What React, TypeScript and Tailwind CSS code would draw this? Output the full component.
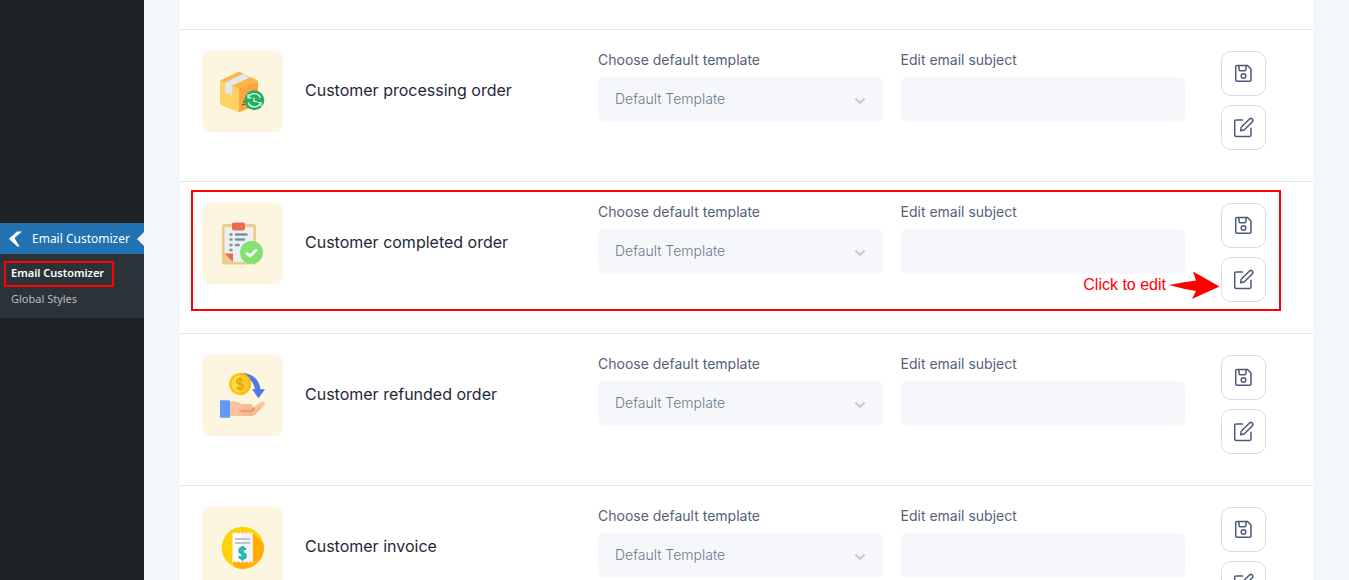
import { useState } from 'react'
import type { ReactNode } from 'react'
import { ChevronDown } from 'lucide-react'

interface EmailTemplate {
  id: string
  name: string
  icon: ReactNode
  highlighted?: boolean
}

function BoxIcon() {
  return (
    <svg width="45" height="45" viewBox="0.5 0.5 45 45" aria-hidden="true">
      <path d="M0.500 12.200 19.500 19.200V43.800L1.500 36.500Q0.500 36 0.500 35Z" fill="#ffd064" />
      <path d="M19.500 19.200 38.500 12.200V35Q38.500 36 37.500 36.500L19.500 43.800Z" fill="#f9a73e" />
      <path d="M0.500 12 18.500 3.600Q19.500 3.200 20.500 3.600L38.500 12 19.500 20Z" fill="#fdb545" />
      <path d="M5.500 14 24.500 5 31.200 8.400 12.500 17.200V28.500L9.500 24.500 5.500 25.500Z" fill="#e3e7ec" />
      <path d="M23.500 33.500 27 32M22.500 36.500 27 35" stroke="#4b4a3b" strokeWidth="1.200" />
      <circle cx="34.800" cy="31.800" r="10" fill="#25ae5f" />
      <path d="M29 28.500A6.500 6.500 0 0 1 40.900 29.500M40.600 35A6.500 6.500 0 0 1 28.700 34" fill="none" stroke="#eafff1" strokeWidth="1.300" />
      <path d="M28.500 25.500v3.800h3.500M41.500 38v-4H38M34.500 29v4h3" fill="none" stroke="#eafff1" strokeWidth="1.200" />
    </svg>
  )
}

function ClipboardIcon() {
  return (
    <svg width="45" height="45" viewBox="0.5 0.5 45 45" aria-hidden="true">
      <rect x="2.500" y="3.500" width="34" height="40.500" rx="2.500" fill="#eccb8b" />
      <path d="M5 6.500H34V41.500H13.500L5 33Z" fill="#efefef" />
      <path d="M5 33H13.500V41.500Z" fill="#e86c55" />
      <path d="M12.500 3.500Q12.500 2 14 2H24Q25.500 2 25.500 3.500V8Q25.500 10 23.500 10H14.500Q12.500 10 12.500 8Z" fill="#e86c55" />
      <path d="M10 14h3M10 19h3M10 24.500h3M10 29.500h3" stroke="#7394a0" strokeWidth="2.600" />
      <path d="M16.500 14H27M16.500 19H24.500M16.500 24.500H19" stroke="#7394a0" strokeWidth="2.600" strokeLinecap="round" />
      <circle cx="32" cy="32" r="11.500" fill="#82e26f" />
      <path d="M27.500 33 30.500 35.500 36.500 29.800" fill="none" stroke="#fff" strokeWidth="2.800" strokeLinecap="round" />
    </svg>
  )
}

function RefundIcon() {
  return (
    <svg width="45" height="45" viewBox="0.5 0.5 45 45" aria-hidden="true">
      <path d="M20.500 0.500C32.500 0.500 39.500 6 41 16.800H45.500L39 25.800 32.500 16.800H35.500C34 9 30 5 20.500 3Z" fill="#4e79e7" />
      <circle cx="20.500" cy="11.500" r="11" fill="#fcc419" />
      <path d="M20.500 0.500A11 11 0 0 1 20.500 22.500Z" fill="#f9bd10" />
      <circle cx="20.500" cy="11.500" r="8.500" fill="#ffdc45" />
      <path d="M20.500 3A8.500 8.500 0 0 1 20.500 20Z" fill="#fccb2b" />
      <path d="M23.500 8.500C23 7 22 6.500 20.500 6.500C16.500 6.500 16.500 11 20.500 11.500C25 12 24.500 16.500 20.500 16.500C19 16.500 17.800 16 17.500 14.500M20.500 5V18" fill="none" stroke="#e9a20b" strokeWidth="1.700" />
      <path d="M10 29.500C14 28 18 28.500 22 31.500H30.500Q33 32 33.500 35L41.500 29.500C44.500 28 46.500 31 44.500 33.500L36 41.500Q33.500 43.500 31 43.500H10Z" fill="#fbc39c" />
      <path d="M22.500 31.500H30.500Q33 32 33.500 34.500Q32 37.500 29.500 37.500H19.500V39.500H31Q35 39.500 37 36.500L39 35 42 35.500 36 41.500Q33.500 43.500 31 43.500H22.500Z" fill="#f5b994" />
      <path d="M19.500 37.500H31L34 34.500 36 36Q34.500 39.800 31 39.800H22Q19.500 39.800 19.500 37.500Z" fill="#e3a07c" />
      <rect x="0.500" y="27.800" width="10" height="17.500" rx="1" fill="#6497f8" />
    </svg>
  )
}

function InvoiceIcon() {
  return (
    <svg width="45" height="45" viewBox="0.5 0.5 45 45" aria-hidden="true">
      <circle cx="23.200" cy="23.200" r="21" fill="#ffd20a" />
      <path d="M33 8 43.800 18.500A21 21 0 0 1 16 42.900L13 38Z" fill="#ffae05" />
      <path d="M13 7.500 15 9.500 17 7.500 19 9.500 21 7.500 23 9.500 25 7.500 27 9.500 29 7.500 31 9.500 33 7.500V38.500L31 36.500 29 38.500 27 36.500 25 38.500 23 36.500 21 38.500 19 36.500 17 38.500 15 36.500 13 38.500Z" fill="#fff" />
      <path d="M23 9.500 25 7.500 27 9.500 29 7.500 31 9.500 33 7.500V38.500L31 36.500 29 38.500 27 36.500 25 38.500 23 36.500Z" fill="#f1f3f8" />
      <path d="M15.500 14.500H30.500M15.500 18.500H30.500" stroke="#bfc3d8" strokeWidth="2" />
      <path d="M26 25.500C25.500 24 24.500 23.500 23 23.500C19 23.500 19 28.500 23 28.800C27 29.200 27 34 23 34C21 34 20 33 20 31.500M23 21.500V36" fill="none" stroke="#1cb8b0" strokeWidth="2.500" />
    </svg>
  )
}

function SaveIcon() {
  return (
    <svg width="19" height="19" viewBox="0 0 19 19" fill="none" stroke="#4b5a78" strokeWidth="1.500" strokeLinejoin="round" aria-hidden="true">
      <path d="M3 1.500H13.500L17 5V16Q17 17.200 15.800 17.200H3Q1.700 17.200 1.700 16V2.800Q1.700 1.500 3 1.500Z" />
      <path d="M5 1.500V5.200Q5 6.700 6.500 6.700H10.500Q12 6.700 12 5.200V1.500" />
      <circle cx="9.500" cy="12" r="2.300" />
    </svg>
  )
}

function EditIcon() {
  return (
    <svg width="21" height="21" viewBox="0 0 21 21" fill="none" stroke="#4b5a78" strokeWidth="1.500" strokeLinecap="round" strokeLinejoin="round" aria-hidden="true">
      <path d="M9.500 3H3.200Q1.700 3 1.700 4.500V18Q1.700 19.500 3.200 19.500H16.500Q18 19.500 18 18V11.500" />
      <path d="M7.700 13.700 8.200 10.200 16.500 2Q17.800 0.800 19.200 2Q20.500 3.400 19.300 4.800L11.200 13Z" />
    </svg>
  )
}

const templates: EmailTemplate[] = [
  { id: 'processing', name: 'Customer processing order', icon: <BoxIcon /> },
  { id: 'completed', name: 'Customer completed order', icon: <ClipboardIcon />, highlighted: true },
  { id: 'refunded', name: 'Customer refunded order', icon: <RefundIcon /> },
  { id: 'invoice', name: 'Customer invoice', icon: <InvoiceIcon /> },
]

function Sidebar() {
  return (
    <nav className="w-36 shrink-0 bg-[#1d2327] pt-[223px] font-['Noto_Sans',sans-serif] text-xs">
      <a href="#customizer" className="relative flex h-[31px] items-center gap-2 bg-[#2271b1] pl-2 text-white">
        <svg width="16" height="16" viewBox="0 0 16 16" fill="#fff" aria-hidden="true">
          <path d="M9 0.500H14L6.500 7 11.500 15.500H9.500L1.500 8.500Q1 7.800 1.500 7.200Z" />
        </svg>
        Email Customizer
        <span className="absolute top-1/2 right-0 -translate-y-1/2 border-y-7 border-r-7 border-y-transparent border-r-[#f0f0f1]" />
      </a>
      <ul className="bg-[#2c3338] py-1.5 text-[11px]">
        <li className="relative">
          <a href="#customizer" className="flex h-[26px] items-center pl-[11px] font-semibold text-white">Email Customizer</a>
          <span className="pointer-events-none absolute top-px left-1 h-[26px] w-[110px] border-2 border-[#fe0000]" />
        </li>
        <li>
          <a href="#styles" className="flex h-[26px] items-center pl-[11px] text-[#b5bcc2]">Global Styles</a>
        </li>
      </ul>
    </nav>
  )
}

function EditHint() {
  return (
    <>
      <span className="pointer-events-none absolute top-[8px] right-8 left-[11px] h-[121px] border-2 border-[#fe0000]" />
      <span className="pointer-events-none absolute top-[89px] right-[93px] flex items-center gap-[3px] font-['Liberation_Sans',Arial,sans-serif] text-base text-[#fe0000]">
        Click to edit
        <svg width="51" height="28" viewBox="0 0 51 28" fill="#fe0000" aria-hidden="true">
          <path d="M0 14Q14 11 27 9.500L24 0.500 50.500 15.500 23 28 27 20Q14 18 0 14Z" />
        </svg>
      </span>
    </>
  )
}

function TemplateRow({ template }: { template: EmailTemplate }) {
  const [subject, setSubject] = useState('')
  const button = 'flex size-[45px] items-center justify-center rounded-[10px] border border-[#d9dbe3] bg-white'
  const label = 'mb-2 block text-sm leading-[18px] text-[#566275]'

  return (
    <li className="relative flex items-start border-t border-[#e3e5e8] pt-[21px] pr-[47px] pb-[31px] pl-[22px]">
      <div className="flex size-[81px] shrink-0 items-center justify-center rounded-lg bg-[#fcf6e1]">{template.icon}</div>
      <h3 className="ml-[22px] flex h-[78px] w-[275px] items-center text-base text-[#1e2838]">{template.name}</h3>

      <div className="ml-[18px] min-w-0 flex-1">
        <label htmlFor={`${template.id}-template`} className={label}>Choose default template</label>
        <div className="relative">
          <select
            id={`${template.id}-template`}
            className="h-[45px] w-full appearance-none rounded-md bg-[#f6f7fb] px-[17px] pb-0.5 text-sm font-light text-[#6c7b8c]"
          >
            <option>Default Template</option>
          </select>
          <ChevronDown size={16} strokeWidth={3} className="pointer-events-none absolute top-4 right-[15px] text-[#c9cbcf]" />
        </div>
      </div>

      <div className="ml-[18px] min-w-0 flex-1">
        <label htmlFor={`${template.id}-subject`} className={label}>Edit email subject</label>
        <input
          id={`${template.id}-subject`}
          type="text"
          value={subject}
          onChange={e => setSubject(e.target.value)}
          className="h-[45px] w-full rounded-md bg-[#f6f7fb] px-[17px] text-sm"
        />
      </div>

      <div className="ml-9 flex flex-col gap-[9px]">
        <button className={button} aria-label="Save"><SaveIcon /></button>
        <button className={button} aria-label="Edit"><EditIcon /></button>
      </div>

      {template.highlighted && <EditHint />}
    </li>
  )
}

export default function App() {
  return (
    <div className="flex h-screen overflow-hidden bg-[#f3f7fc] font-['Inter',sans-serif]">
      <Sidebar />
      <main className="mx-9 min-w-0 flex-1">
        <ul className="bg-white pt-[29px]">
          {templates.map(t => <TemplateRow key={t.id} template={t} />)}
        </ul>
      </main>
    </div>
  )
}
